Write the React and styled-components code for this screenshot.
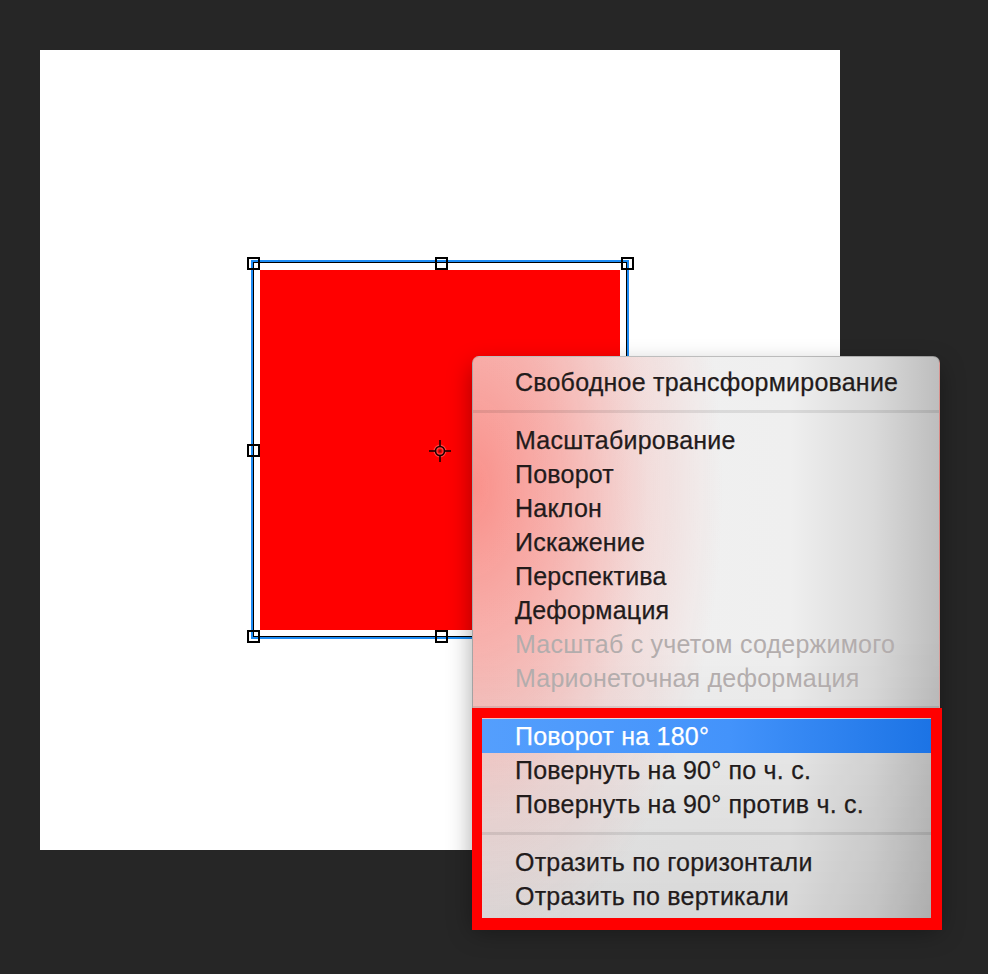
import React from 'react';
import styled, { createGlobalStyle } from 'styled-components';

const Global = createGlobalStyle`
  html, body { margin: 0; padding: 0; background: #262626; }
  body { width: 988px; height: 974px; overflow: hidden; font-family: "Liberation Sans", Arial, sans-serif; }
`;

const Page = styled.div`
  position: relative;
  width: 988px;
  height: 974px;
  padding: 50px 0 0 40px;
  box-sizing: border-box;
`;

const Canvas = styled.div`
  position: relative;
  width: 800px;
  height: 800px;
  background: #ffffff;
`;

const Shape = styled.div`
  position: absolute;
  left: 220px;
  top: 220px;
  width: 360px;
  height: 360px;
  background: #ff0000;
`;

const Frame = styled.div`
  position: absolute;
  left: 211px;
  top: 210px;
  width: 378px;
  height: 379px;
  box-sizing: border-box;
  border: 2px solid #1b8cf5;
  box-shadow: inset 0 0 0 1px #000;
`;

const Handle = styled.div`
  position: absolute;
  left: ${p => p.$x - 6.5}px;
  top: ${p => p.$y - 6.5}px;
  width: 13px;
  height: 13px;
  box-sizing: border-box;
  border: 2px solid #000;
`;

const Pivot = styled.svg`
  position: absolute;
  left: 388px;
  top: 389px;
  width: 24px;
  height: 24px;
`;

const Menu = styled.div`
  position: absolute;
  left: 472px;
  top: 356px;
  width: 468px;
  padding: 8px 0;
  box-sizing: border-box;
  border-radius: 7px;
  overflow: hidden;
  border: 1px solid rgba(0, 0, 0, 0.12);
  background:
    radial-gradient(ellipse 250px 470px at 0px 130px, rgba(255, 85, 75, 0.62) 0%, rgba(255, 85, 75, 0.4) 35%, rgba(255, 85, 75, 0.13) 70%, rgba(255, 85, 75, 0) 100%),
    linear-gradient(to bottom, rgba(0, 0, 0, 0) 0%, rgba(0, 0, 0, 0) 50%, rgba(0, 0, 0, 0.1) 100%),
    linear-gradient(to right, #f2f2f2 0%, #efefef 68%, #dadada 86%, #bdbdbd 100%);
  box-shadow: 0 10px 24px rgba(0, 0, 0, 0.35);
`;

const Item = styled.div`
  height: 34px;
  line-height: 34px;
  padding-left: 42px;
  font-size: 25px;
  letter-spacing: 0.22px;
  white-space: nowrap;
  -webkit-text-stroke: ${p => (p.$disabled ? '0' : '0.25px')};
  color: ${p => (p.$disabled ? '#b3adad' : p.$active ? '#ffffff' : '#221b1b')};
  background: ${p => (p.$active ? 'linear-gradient(to right, #559ffd 0%, #4393fb 55%, #1a72e4 100%)' : 'transparent')};
`;

const Separator = styled.div`
  height: 24px;
  display: flex;
  align-items: center;
  &::after {
    content: '';
    display: block;
    width: 100%;
    height: 3px;
    background: rgba(0, 0, 0, 0.09);
  }
`;

const Callout = styled.div`
  position: absolute;
  left: 472px;
  top: 708px;
  width: 470px;
  height: 222px;
  box-sizing: border-box;
  border-style: solid;
  border-color: #ff0000;
  border-width: 10px 11px 12px 10px;
  pointer-events: none;
`;

const handles = [
  [213, 213], [401, 213], [587, 213],
  [213, 400], [587, 400],
  [213, 586], [401, 586], [587, 586],
];

const groups = [
  [{ t: 'Свободное трансформирование' }],
  [
    { t: 'Масштабирование' },
    { t: 'Поворот' },
    { t: 'Наклон' },
    { t: 'Искажение' },
    { t: 'Перспектива' },
    { t: 'Деформация' },
    { t: 'Масштаб с учетом содержимого', d: true },
    { t: 'Марионеточная деформация', d: true },
  ],
  [
    { t: 'Поворот на 180°', a: true },
    { t: 'Повернуть на 90° по ч. с.' },
    { t: 'Повернуть на 90° против ч. с.' },
  ],
  [
    { t: 'Отразить по горизонтали' },
    { t: 'Отразить по вертикали' },
  ],
];

export default function App() {
  return (
    <>
      <Global />
      <Page>
        <Canvas>
          <Shape />
          <Frame />
          {handles.map(([x, y], i) => (
            <Handle key={i} $x={x} $y={y} />
          ))}
          <Pivot viewBox="0 0 24 24">
            <g stroke="#ff6b6b" strokeWidth="4" fill="none" opacity="0.6">
              <circle cx="12" cy="12" r="4.5" />
            </g>
            <g stroke="#1a0000" strokeWidth="1.6" fill="none">
              <circle cx="12" cy="12" r="4.5" />
              <line x1="12" y1="1" x2="12" y2="7.5" />
              <line x1="12" y1="16.5" x2="12" y2="23" />
              <line x1="1" y1="12" x2="7.5" y2="12" />
              <line x1="16.5" y1="12" x2="23" y2="12" />
            </g>
            <circle cx="12" cy="12" r="1.5" fill="#8a1010" />
          </Pivot>
        </Canvas>
        <Menu>
          {groups.map((g, gi) => (
            <React.Fragment key={gi}>
              {gi > 0 && <Separator />}
              {g.map(it => (
                <Item key={it.t} $disabled={it.d} $active={it.a}>
                  {it.t}
                </Item>
              ))}
            </React.Fragment>
          ))}
        </Menu>
        <Callout />
      </Page>
    </>
  );
}
